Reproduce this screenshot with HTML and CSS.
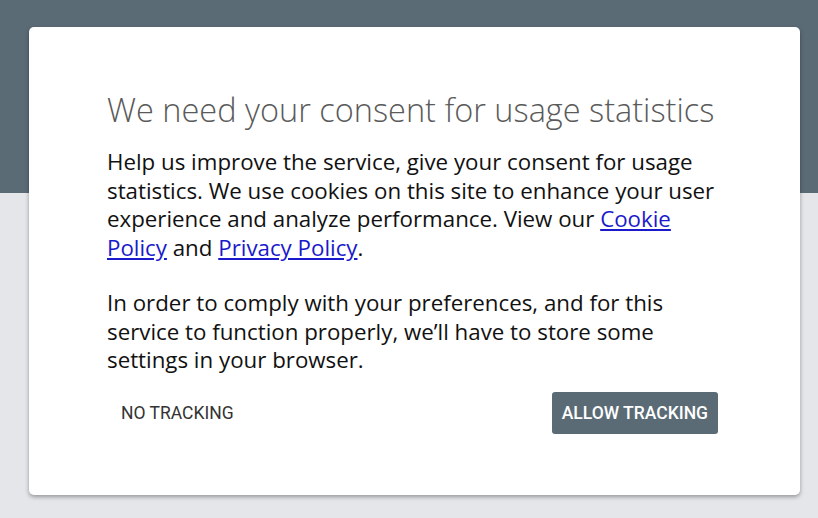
FILE: index.html
```html
<!DOCTYPE html>
<html lang="en">
<head>
    <meta charset="UTF-8">
    <title>Usage statistics consent</title>
    <link rel="stylesheet" href="styles.css">
</head>
<body>
    <div class="top-band"></div>

    <div class="consent-dialog">
        <h1 class="consent-title">We need your consent for usage statistics</h1>
        <p class="consent-text">Help us improve the service, give your consent for usage statistics. We use cookies on this site to enhance your user experience and analyze performance. View our <a href="#">Cookie Policy</a> and <a href="#">Privacy Policy</a>.</p>
        <p class="consent-text">In order to comply with your preferences, and for this service to function properly, we’ll have to store some settings in your browser.</p>

        <div class="consent-actions">
            <button class="btn btn-text">No tracking</button>
            <button class="btn btn-primary">Allow tracking</button>
        </div>
    </div>
</body>
</html>
```

FILE: styles.css
```css
body {
    margin: 0;
    background-color: #e4e6ea;
    font-family: 'Open Sans', sans-serif;
    min-height: 518px;
}

.top-band {
    height: 193px;
    background-color: #5b6b76;
}

/* dialog card sits over the band */
.consent-dialog {
    position: absolute;
    top: 27px;
    left: 29px;
    width: 771px;
    height: 468px;
    box-sizing: border-box;
    padding: 63px 72px 0 78px;
    background-color: #fff;
    border-radius: 5px;
    box-shadow: 0 2px 4px rgba(0, 0, 0, 0.35);
}

.consent-title {
    margin: 0 0 18px;
    font-family: 'Open Sans', sans-serif;
    font-weight: 300;
    font-size: 32.5px;
    line-height: 40px;
    color: #5a5a5a;
    white-space: nowrap;
}

.consent-text {
    margin: 0 0 26px;
    font-family: 'Open Sans', sans-serif;
    font-size: 22.3px;
    line-height: 28.7px;
    color: #111;
}

.consent-text a {
    color: #1a1acc;
}

.consent-actions {
    display: flex;
    justify-content: space-between;
    align-items: center;
    margin-top: -9px;
    padding-right: 10px;
}

.btn {
    font-family: Roboto, sans-serif;
    font-size: 17.5px;
    text-transform: uppercase;
    border: none;
    border-radius: 3px;
    height: 42px;
    padding: 0 14px;
    cursor: pointer;
}

.btn-text {
    background: none;
    color: #333;
}

.btn-primary {
    background-color: #5b6b76;
    color: #fff;
    font-weight: 500;
    padding: 0 10px;
}
```
